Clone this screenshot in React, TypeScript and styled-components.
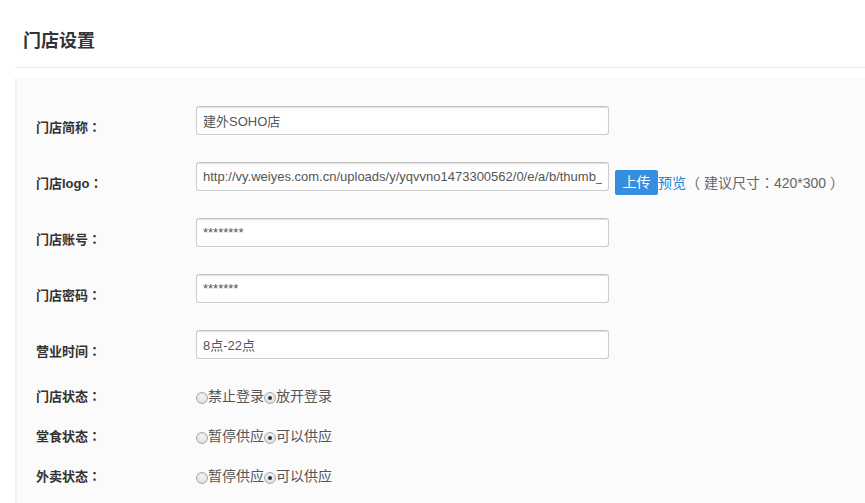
import React from 'react';
import styled, { createGlobalStyle } from 'styled-components';

const GlobalStyle = createGlobalStyle`
  html, body {
    margin: 0;
    padding: 0;
    background: #fff;
  }
  body {
    font-family: "Liberation Sans", "Noto Sans CJK SC", sans-serif;
    color: #333;
  }
`;

const FONT = `"Liberation Sans", "Noto Sans CJK SC", sans-serif`;

const Page = styled.div`
  width: 865px;
  height: 503px;
  overflow: hidden;
`;

const Header = styled.div`
  margin-left: 15px;
  padding: 28px 0 13px 8px;
  border-bottom: 1px solid #e6e6e6;
`;

const Title = styled.h2`
  margin: 0;
  font-size: 18px;
  line-height: 26px;
  font-weight: bold;
  color: #333;
`;

const Panel = styled.div`
  margin: 10px 0 0 15px;
  border-left: 2px solid #f0f0f0;
  background: #fbfbfb;
  padding: 28px 0 0 19px;
  display: flex;
  flex-direction: column;
`;

const InputRow = styled.div`
  display: flex;
  align-items: flex-start;
  height: 29px;
  margin-bottom: 27px;
  &:last-of-type {
    margin-bottom: 28px;
  }
`;

const ChoiceRow = styled.div`
  display: flex;
  align-items: center;
  height: 20px;
  margin-bottom: 20px;
  &:last-child {
    margin-bottom: 17px;
  }
`;

const Label = styled.label<{ $top?: number }>`
  width: 160px;
  flex: none;
  padding-top: ${p => p.$top ?? 0}px;
  font-size: 13px;
  line-height: 20px;
  font-weight: bold;
  color: #333;
`;

/* full-width colon centred in its cell, as the original CJK font draws it */
const Colon = styled.span`
  font-family: "Noto Sans CJK TC", sans-serif;
`;

const TextInput = styled.input`
  box-sizing: border-box;
  width: 413px;
  height: 29px;
  padding: 0 6px;
  margin: 0;
  border: 1px solid #ccc;
  border-top-color: #c2c2c2;
  border-radius: 3px;
  box-shadow: inset 0 1px 1px rgba(0, 0, 0, 0.12);
  background: #fff;
  font-family: ${FONT};
  font-size: 13px;
  color: #555;
  outline: none;
`;

const UploadButton = styled.button`
  flex: none;
  margin: 8px 0 0 6px;
  width: 43px;
  height: 25px;
  padding: 0;
  border: none;
  border-radius: 2px;
  background: #368ee0;
  color: #fff;
  font-family: ${FONT};
  font-size: 14px;
  line-height: 25px;
  cursor: pointer;
`;

const Hint = styled.span`
  margin-top: 10px;
  font-size: 14px;
  line-height: 20px;
  color: #666;
  white-space: nowrap;
`;

const PreviewLink = styled.a`
  color: #1a87d8;
  text-decoration: none;
`;

const Options = styled.div`
  display: flex;
  align-items: center;
`;

const Option = styled.label`
  display: flex;
  align-items: center;
  font-size: 14px;
  line-height: 20px;
  color: #555;
`;

const Radio = styled.span<{ $checked?: boolean }>`
  box-sizing: border-box;
  width: 12px;
  height: 12px;
  margin: 3px 0 0 0;
  border-radius: 50%;
  border: 1px solid #a9a9a9;
  background: radial-gradient(circle at 50% 35%, #f4f4f4 0%, #dcdcdc 100%);
  position: relative;
  flex: none;
  &::after {
    content: '';
    display: ${p => (p.$checked ? 'block' : 'none')};
    position: absolute;
    left: 3px;
    top: 3px;
    width: 4px;
    height: 4px;
    border-radius: 50%;
    background: #333;
  }
`;

const textFields = [
  { label: '门店简称', value: '建外SOHO店' },
  {
    label: '门店logo',
    value: 'http://vy.weiyes.com.cn/uploads/y/yqvvno1473300562/0/e/a/b/thumb_57d4e0a1c5c2b.jpg',
    upload: true,
  },
  { label: '门店账号', value: '********' },
  { label: '门店密码', value: '*******' },
  { label: '营业时间', value: '8点-22点' },
];

const choices = [
  { label: '门店状态', options: ['禁止登录', '放开登录'], checked: 1 },
  { label: '堂食状态', options: ['暂停供应', '可以供应'], checked: 1 },
  { label: '外卖状态', options: ['暂停供应', '可以供应'], checked: 1 },
];

export default function App() {
  return (
    <Page>
      <GlobalStyle />
      <Header>
        <Title>门店设置</Title>
      </Header>
      <Panel>
        {textFields.map(f => (
          <InputRow key={f.label}>
            <Label $top={11}>
              {f.label}
              <Colon>：</Colon>
            </Label>
            <TextInput type="text" defaultValue={f.value} readOnly />
            {f.upload && (
              <>
                <UploadButton type="button">上传</UploadButton>
                <Hint>
                  <PreviewLink href="#">预览</PreviewLink>
                  <Colon>（</Colon> 建议尺寸<Colon>：</Colon>420*300 <Colon>）</Colon>
                </Hint>
              </>
            )}
          </InputRow>
        ))}
        {choices.map(c => (
          <ChoiceRow key={c.label}>
            <Label>
              {c.label}
              <Colon>：</Colon>
            </Label>
            <Options>
              {c.options.map((o, i) => (
                <Option key={o}>
                  <Radio $checked={i === c.checked} />
                  {o}
                </Option>
              ))}
            </Options>
          </ChoiceRow>
        ))}
      </Panel>
    </Page>
  );
}
